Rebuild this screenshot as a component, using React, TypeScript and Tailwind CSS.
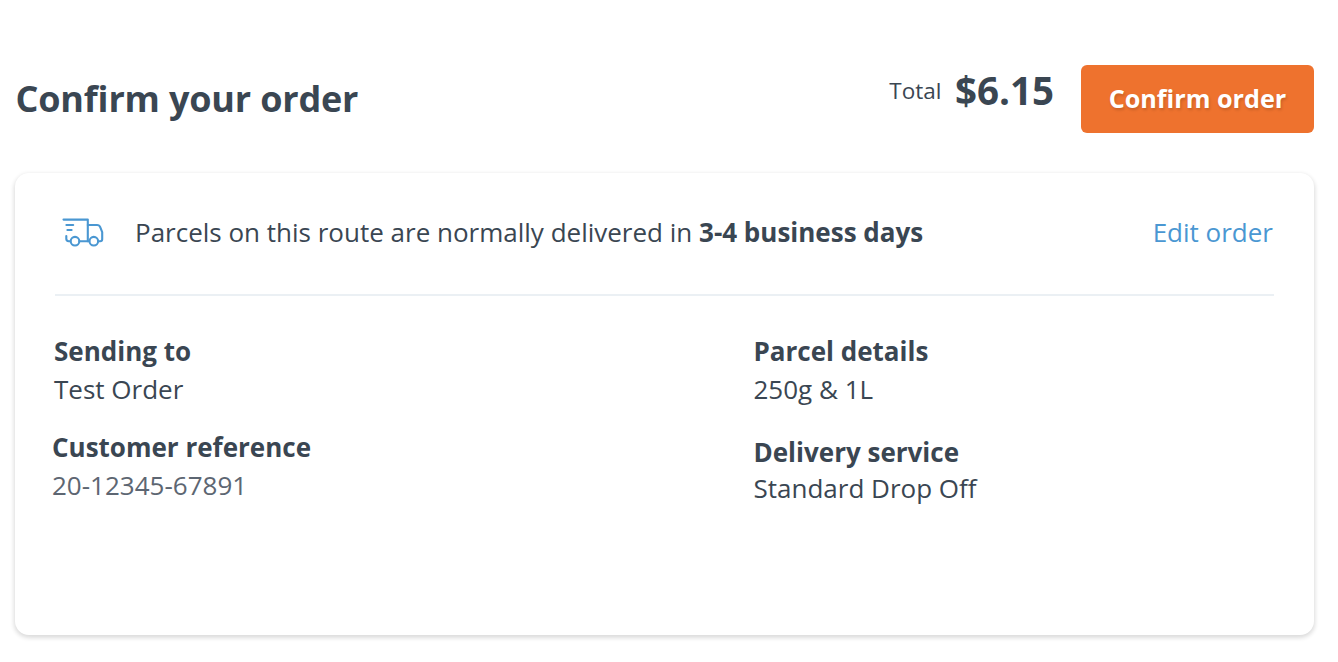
import type { ReactNode } from "react"
import clsx from "clsx"

const TruckIcon = () => {
    return (
        <svg
            width="42"
            height="30"
            viewBox="0 0 42 30"
            fill="none"
            stroke="#4a97d2"
            strokeWidth="2.1"
            strokeLinecap="round"
            strokeLinejoin="round"
            className="shrink-0"
        >
            <path d="M1.5 2.6H25.8V24.2M4.4 8H11.2M5.4 13H9.6" />
            <path d="M4.3 19V21.8Q4.3 24.2 6.7 24.2H8.2M17.4 24.2H27.2" />
            <path d="M25.8 8H35Q37.5 8 38.2 10.2L40.2 15.2V22.2Q40.2 24.2 38.2 24.2H36.4" />
            <circle cx="13" cy="24.2" r="4.3" />
            <circle cx="31.8" cy="24.2" r="4.3" />
        </svg>
    )
}

type DetailProps = {
    label: string
    children: ReactNode
    className?: string
    valueClassName?: string
}

const Detail = ({ label, children, className, valueClassName }: DetailProps) => {
    return (
        <div className={className}>
            <dt className="h-[38px] font-bold">{label}</dt>
            <dd className={clsx("h-[38px]", valueClassName)}>{children}</dd>
        </div>
    )
}

export default function App() {
    return (
        <main className="h-[662px] bg-white pt-[65px] pr-6 pl-[15px] font-['Open_Sans',sans-serif] text-[26px] leading-[38px] whitespace-nowrap text-[#3a4652]">
            <header className="flex h-[108px] items-start justify-between">
                <h1 className="pt-[10px] pl-[0.5px] text-[36px] leading-[48px] font-bold tracking-[-0.18px]">Confirm your order</h1>
                <div className="flex items-start">
                    <span className="pt-[7px] text-[22.5px]">Total</span>
                    <span className="ml-[13.5px] pt-[1px] text-[38.5px] leading-[48px] font-bold">$6.15</span>
                    <button className="ml-[27px] h-[68px] w-[233px] rounded-[6px] bg-[#ee722e] pb-[2px] text-[25.2px] font-bold text-white [text-shadow:1px_2px_3px_rgba(0,0,0,0.16)]">
                        Confirm order
                    </button>
                </div>
            </header>

            <section className="h-[462px] rounded-[14px] bg-white px-10 shadow-[0_2px_4px_1px_rgba(0,0,0,0.14)]">
                <div className="flex h-[123px] items-center border-b-2 border-[#ebf0f4] pb-[4px]">
                    <div className="mt-[1px] ml-[7px]">
                        <TruckIcon />
                    </div>
                    <p className="ml-[31px]">
                        Parcels on this route are normally delivered in <strong>3-4 business days</strong>
                    </p>
                    <a href="#" className="mr-[1px] ml-auto text-[#4a97d2]">Edit order</a>
                </div>

                <div className="-ml-[1px] flex pt-[36px]">
                    <dl className="w-[699.5px]">
                        <Detail label="Sending to">Test Order</Detail>
                        <Detail label="Customer reference" className="-ml-[2px] pt-[20px]" valueClassName="text-[#5d6672]">
                            20-12345-67891
                        </Detail>
                    </dl>
                    <dl>
                        <Detail label="Parcel details">250g &amp; 1L</Detail>
                        <Detail label="Delivery service" className="pt-[25px]" valueClassName="-mt-[2px]">
                            Standard Drop Off
                        </Detail>
                    </dl>
                </div>
            </section>
        </main>
    )
}
